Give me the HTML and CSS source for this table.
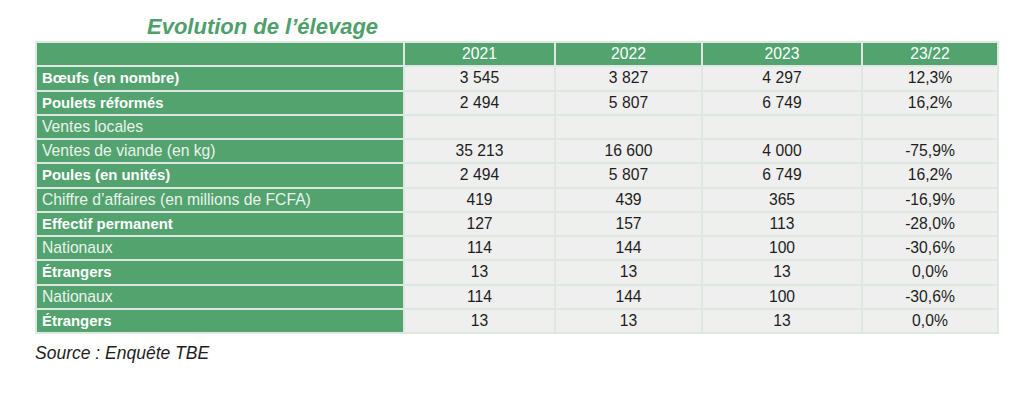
FILE: index.html
```html
<!DOCTYPE html>
<html lang="fr">
<head>
<meta charset="utf-8">
<title>Evolution de l’élevage</title>
<link rel="stylesheet" href="styles.css">
</head>
<body>
<div class="page">
  <h1 class="title">Evolution de l’élevage</h1>
  <table class="data">
    <colgroup>
      <col class="c-label"><col class="c-2021"><col class="c-2022"><col class="c-2023"><col class="c-var">
    </colgroup>
    <thead>
      <tr><th class="lab"></th><th>2021</th><th>2022</th><th>2023</th><th>23/22</th></tr>
    </thead>
    <tbody>
      <tr><th class="lab strong">Bœufs (en nombre)</th><td>3 545</td><td>3 827</td><td>4 297</td><td>12,3%</td></tr>
      <tr><th class="lab strong">Poulets réformés</th><td>2 494</td><td>5 807</td><td>6 749</td><td>16,2%</td></tr>
      <tr><th class="lab">Ventes locales</th><td></td><td></td><td></td><td></td></tr>
      <tr><th class="lab">Ventes de viande (en kg)</th><td>35 213</td><td>16 600</td><td>4 000</td><td>-75,9%</td></tr>
      <tr><th class="lab strong">Poules (en unités)</th><td>2 494</td><td>5 807</td><td>6 749</td><td>16,2%</td></tr>
      <tr><th class="lab">Chiffre d’affaires (en millions de FCFA)</th><td>419</td><td>439</td><td>365</td><td>-16,9%</td></tr>
      <tr><th class="lab strong">Effectif permanent</th><td>127</td><td>157</td><td>113</td><td>-28,0%</td></tr>
      <tr><th class="lab">Nationaux</th><td>114</td><td>144</td><td>100</td><td>-30,6%</td></tr>
      <tr><th class="lab strong">Étrangers</th><td>13</td><td>13</td><td>13</td><td>0,0%</td></tr>
      <tr><th class="lab">Nationaux</th><td>114</td><td>144</td><td>100</td><td>-30,6%</td></tr>
      <tr><th class="lab strong">Étrangers</th><td>13</td><td>13</td><td>13</td><td>0,0%</td></tr>
    </tbody>
  </table>
  <p class="source">Source : Enquête TBE</p>
</div>
</body>
</html>
```

FILE: styles.css
```css
html, body {
  margin: 0;
  padding: 0;
  background: #ffffff;
}

.page {
  font-family: "Liberation Sans", Arial, Helvetica, sans-serif;
  color: #1e1e1e;
}

.title {
  margin: 0;
  padding: 15px 0 0 147px;
  font-size: 22px;
  line-height: 24px;
  font-weight: 700;
  font-style: italic;
  color: #4f9f6c;
}

.data {
  margin: 2px 0 0 35px;
  border-collapse: separate;
  border-spacing: 2px;
  background: #dde9e0;
  table-layout: fixed;
  width: 964px;
  font-size: 15.7px;
}

.c-label { width: 366px; }
.c-2021 { width: 149px; }
.c-2022 { width: 145px; }
.c-2023 { width: 158px; }
.c-var { width: 134px; }

.data th,
.data td {
  height: 22.25px;
  padding: 0;
  line-height: 18px;
  vertical-align: middle;
  white-space: nowrap;
}

.data thead th {
  background: #53a36f;
  color: #ffffff;
  font-weight: 400;
  text-align: center;
}

.data td {
  background: #eeefee;
  text-align: center;
  color: #1e1e1e;
  font-weight: 400;
}

.data .lab {
  background: #53a36f;
  text-align: left;
  padding-left: 5px;
  font-weight: 400;
  color: #eaf3ec;
}

.data .lab.strong {
  font-size: 14.9px;
  font-weight: 700;
  color: #ffffff;
}

.source {
  margin: 8px 0 0 35px;
  font-size: 17.5px;
  line-height: 22px;
  font-style: italic;
  color: #1e1e1e;
}
```
